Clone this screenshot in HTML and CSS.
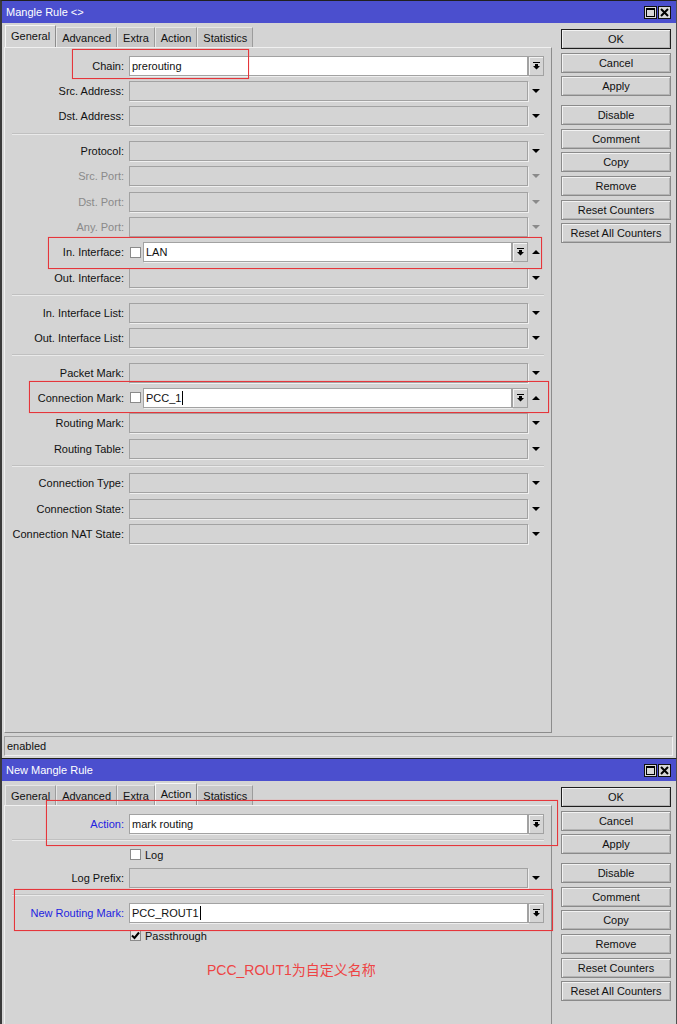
FILE: index.html
```html
<!DOCTYPE html>
<html lang="en">
<head>
    <meta charset="UTF-8">
    <title>Mangle Rule</title>
    <link rel="stylesheet" href="styles.css">
</head>
<body>
    <div class="window window-first">
        <div class="titlebar">
            <span class="title">Mangle Rule &lt;&gt;</span>
            <span class="win-controls">
                <span class="win-ctl"><svg width="9" height="9" viewBox="0 0 9 9"><rect x="0.5" y="0.5" width="8" height="8" fill="none" stroke="#000"/><rect x="0" y="0" width="9" height="2" fill="#000"/></svg></span>
                <span class="win-ctl"><svg width="9" height="9" viewBox="0 0 9 9"><path d="M1 1L8 8M8 1L1 8" stroke="#000" stroke-width="2"/></svg></span>
            </span>
        </div>
        <div class="win-body">
            <div class="main">
                <div class="tabs">
                    <span class="tab active">General</span>
                    <span class="tab">Advanced</span>
                    <span class="tab">Extra</span>
                    <span class="tab">Action</span>
                    <span class="tab">Statistics</span>
                </div>
                <div class="panel panel-first">
                    <div class="row">
                        <span class="label">Chain:</span>
                        <div class="ctrl">
                            <div class="field white">prerouting</div>
                            <span class="dd-btn"><svg width="7" height="8" viewBox="0 0 7 8"><rect width="7" height="1"/><path d="M2 2h3v2h2L3.5 7.5 0 4h2z"/></svg></span>
                        </div>
                    </div>
                    <div class="row">
                        <span class="label">Src. Address:</span>
                        <div class="ctrl"><div class="field"></div><span class="arrow"><svg width="8" height="4" viewBox="0 0 8 4"><path d="M0 0h8L4 4z"/></svg></span></div>
                    </div>
                    <div class="row">
                        <span class="label">Dst. Address:</span>
                        <div class="ctrl"><div class="field"></div><span class="arrow"><svg width="8" height="4" viewBox="0 0 8 4"><path d="M0 0h8L4 4z"/></svg></span></div>
                    </div>
                    <div class="sep"></div>
                    <div class="row">
                        <span class="label">Protocol:</span>
                        <div class="ctrl"><div class="field"></div><span class="arrow"><svg width="8" height="4" viewBox="0 0 8 4"><path d="M0 0h8L4 4z"/></svg></span></div>
                    </div>
                    <div class="row">
                        <span class="label dim">Src. Port:</span>
                        <div class="ctrl"><div class="field"></div><span class="arrow dim"><svg width="8" height="4" viewBox="0 0 8 4"><path d="M0 0h8L4 4z"/></svg></span></div>
                    </div>
                    <div class="row">
                        <span class="label dim">Dst. Port:</span>
                        <div class="ctrl"><div class="field"></div><span class="arrow dim"><svg width="8" height="4" viewBox="0 0 8 4"><path d="M0 0h8L4 4z"/></svg></span></div>
                    </div>
                    <div class="row">
                        <span class="label dim">Any. Port:</span>
                        <div class="ctrl"><div class="field"></div><span class="arrow dim"><svg width="8" height="4" viewBox="0 0 8 4"><path d="M0 0h8L4 4z"/></svg></span></div>
                    </div>
                    <div class="row">
                        <span class="label">In. Interface:</span>
                        <div class="ctrl">
                            <div class="neg">
                                <span class="check"></span>
                                <div class="field white">LAN</div>
                                <span class="dd-btn"><svg width="7" height="8" viewBox="0 0 7 8"><rect width="7" height="1"/><path d="M2 2h3v2h2L3.5 7.5 0 4h2z"/></svg></span>
                            </div>
                            <span class="arrow"><svg width="8" height="4" viewBox="0 0 8 4"><path d="M0 4h8L4 0z"/></svg></span>
                        </div>
                    </div>
                    <div class="row">
                        <span class="label">Out. Interface:</span>
                        <div class="ctrl"><div class="field"></div><span class="arrow"><svg width="8" height="4" viewBox="0 0 8 4"><path d="M0 0h8L4 4z"/></svg></span></div>
                    </div>
                    <div class="sep"></div>
                    <div class="row">
                        <span class="label">In. Interface List:</span>
                        <div class="ctrl"><div class="field"></div><span class="arrow"><svg width="8" height="4" viewBox="0 0 8 4"><path d="M0 0h8L4 4z"/></svg></span></div>
                    </div>
                    <div class="row">
                        <span class="label">Out. Interface List:</span>
                        <div class="ctrl"><div class="field"></div><span class="arrow"><svg width="8" height="4" viewBox="0 0 8 4"><path d="M0 0h8L4 4z"/></svg></span></div>
                    </div>
                    <div class="sep"></div>
                    <div class="row">
                        <span class="label">Packet Mark:</span>
                        <div class="ctrl"><div class="field"></div><span class="arrow"><svg width="8" height="4" viewBox="0 0 8 4"><path d="M0 0h8L4 4z"/></svg></span></div>
                    </div>
                    <div class="row">
                        <span class="label">Connection Mark:</span>
                        <div class="ctrl">
                            <div class="neg">
                                <span class="check"></span>
                                <div class="field white">PCC_1<span class="caret"></span></div>
                                <span class="dd-btn"><svg width="7" height="8" viewBox="0 0 7 8"><rect width="7" height="1"/><path d="M2 2h3v2h2L3.5 7.5 0 4h2z"/></svg></span>
                            </div>
                            <span class="arrow"><svg width="8" height="4" viewBox="0 0 8 4"><path d="M0 4h8L4 0z"/></svg></span>
                        </div>
                    </div>
                    <div class="row">
                        <span class="label">Routing Mark:</span>
                        <div class="ctrl"><div class="field"></div><span class="arrow"><svg width="8" height="4" viewBox="0 0 8 4"><path d="M0 0h8L4 4z"/></svg></span></div>
                    </div>
                    <div class="row">
                        <span class="label">Routing Table:</span>
                        <div class="ctrl"><div class="field"></div><span class="arrow"><svg width="8" height="4" viewBox="0 0 8 4"><path d="M0 0h8L4 4z"/></svg></span></div>
                    </div>
                    <div class="sep"></div>
                    <div class="row">
                        <span class="label">Connection Type:</span>
                        <div class="ctrl"><div class="field"></div><span class="arrow"><svg width="8" height="4" viewBox="0 0 8 4"><path d="M0 0h8L4 4z"/></svg></span></div>
                    </div>
                    <div class="row">
                        <span class="label">Connection State:</span>
                        <div class="ctrl"><div class="field"></div><span class="arrow"><svg width="8" height="4" viewBox="0 0 8 4"><path d="M0 0h8L4 4z"/></svg></span></div>
                    </div>
                    <div class="row">
                        <span class="label">Connection NAT State:</span>
                        <div class="ctrl"><div class="field"></div><span class="arrow"><svg width="8" height="4" viewBox="0 0 8 4"><path d="M0 0h8L4 4z"/></svg></span></div>
                    </div>
                </div>
            </div>
            <div class="actions">
                <span class="btn btn-default">OK</span>
                <span class="btn">Cancel</span>
                <span class="btn">Apply</span>
                <span class="btn btn-gap">Disable</span>
                <span class="btn">Comment</span>
                <span class="btn">Copy</span>
                <span class="btn">Remove</span>
                <span class="btn">Reset Counters</span>
                <span class="btn">Reset All Counters</span>
            </div>
        </div>
        <div class="status">enabled</div>

        <div class="mark mark-chain"></div>
        <div class="mark mark-in-iface"></div>
        <div class="mark mark-conn-mark"></div>
    </div>

    <div class="window window-second">
        <div class="titlebar">
            <span class="title">New Mangle Rule</span>
            <span class="win-controls">
                <span class="win-ctl"><svg width="9" height="9" viewBox="0 0 9 9"><rect x="0.5" y="0.5" width="8" height="8" fill="none" stroke="#000"/><rect x="0" y="0" width="9" height="2" fill="#000"/></svg></span>
                <span class="win-ctl"><svg width="9" height="9" viewBox="0 0 9 9"><path d="M1 1L8 8M8 1L1 8" stroke="#000" stroke-width="2"/></svg></span>
            </span>
        </div>
        <div class="win-body">
            <div class="main">
                <div class="tabs">
                    <span class="tab">General</span>
                    <span class="tab">Advanced</span>
                    <span class="tab">Extra</span>
                    <span class="tab active">Action</span>
                    <span class="tab">Statistics</span>
                </div>
                <div class="panel panel-second">
                    <div class="row">
                        <span class="label blue">Action:</span>
                        <div class="ctrl">
                            <div class="field white">mark routing</div>
                            <span class="dd-btn"><svg width="7" height="8" viewBox="0 0 7 8"><rect width="7" height="1"/><path d="M2 2h3v2h2L3.5 7.5 0 4h2z"/></svg></span>
                        </div>
                    </div>
                    <div class="sep sep-short"></div>
                    <div class="row-check">
                        <span class="check"></span>
                        <span class="check-label">Log</span>
                    </div>
                    <div class="row">
                        <span class="label">Log Prefix:</span>
                        <div class="ctrl"><div class="field"></div><span class="arrow"><svg width="8" height="4" viewBox="0 0 8 4"><path d="M0 0h8L4 4z"/></svg></span></div>
                    </div>
                    <div class="sep"></div>
                    <div class="row">
                        <span class="label blue">New Routing Mark:</span>
                        <div class="ctrl">
                            <div class="field white">PCC_ROUT1<span class="caret"></span></div>
                            <span class="dd-btn"><svg width="7" height="8" viewBox="0 0 7 8"><rect width="7" height="1"/><path d="M2 2h3v2h2L3.5 7.5 0 4h2z"/></svg></span>
                        </div>
                    </div>
                    <div class="row-check">
                        <span class="check checked"><svg width="9" height="9" viewBox="0 0 9 9"><path d="M1 4.5L3.5 7 8 1.5" fill="none" stroke="#000" stroke-width="2"/></svg></span>
                        <span class="check-label">Passthrough</span>
                    </div>
                </div>
            </div>
            <div class="actions">
                <span class="btn btn-default">OK</span>
                <span class="btn">Cancel</span>
                <span class="btn">Apply</span>
                <span class="btn btn-gap">Disable</span>
                <span class="btn">Comment</span>
                <span class="btn">Copy</span>
                <span class="btn">Remove</span>
                <span class="btn">Reset Counters</span>
                <span class="btn">Reset All Counters</span>
            </div>
        </div>

        <div class="mark mark-action"></div>
        <div class="mark mark-routing"></div>
        <div class="note">PCC_ROUT1为自定义名称</div>
    </div>
</body>
</html>
```

FILE: styles.css
```css
* {
    box-sizing: border-box;
}
body {
    margin: 0;
    width: 677px;
    height: 1024px;
    overflow: hidden;
    background-color: #d4d4d4;
    font-family: "Liberation Sans", Arial, sans-serif;
    font-size: 11px;
    color: #111;
}
.window {
    position: relative;
    width: 677px;
    background-color: #d4d4d4;
    border-top: 1px solid #202020;
    border-left: 2px solid #3a3a3a;
    border-right: 1px solid #505050;
}
.window-first {
    height: 758px;
}
.window-second {
    height: 266px;
    overflow: hidden;
}
.titlebar {
    height: 22px;
    background-color: #4b4fce;
    color: #fff;
    display: flex;
    align-items: center;
    justify-content: space-between;
    padding: 0 5px 0 4px;
}
.win-controls {
    display: flex;
    gap: 1px;
}
.win-ctl {
    width: 13px;
    height: 13px;
    background-color: #d8d8d8;
    border: 1px solid #111;
    display: flex;
    align-items: center;
    justify-content: center;
}
.win-body {
    display: flex;
    padding: 2px 0 0 2px;
}
.main {
    width: 548px;
}
.tabs {
    display: flex;
    align-items: flex-end;
    height: 22px;
    padding-left: 1px;
}
.tab {
    height: 20px;
    padding: 0 5px;
    display: flex;
    align-items: center;
    background-color: #c8c8c8;
    border: 1px solid #9c9c9c;
    border-color: #e6e6e6 #9c9c9c transparent #e6e6e6;
    border-bottom: none;
}
.tab.active {
    height: 22px;
    padding-bottom: 2px;
    background-color: #d4d4d4;
    border-color: #f6f6f6 #8c8c8c transparent #f6f6f6;
}
.panel {
    border: 1px solid;
    border-color: #f0f0f0 #8c8c8c #8c8c8c #f0f0f0;
    padding: 5px 7px 0 0;
}
.panel-first {
    height: 686px;
}
.panel-second {
    height: 320px;
}
.row {
    height: 25.3px;
    display: flex;
    align-items: center;
}
.label {
    width: 119px;
    margin-right: 5px;
    text-align: right;
    white-space: nowrap;
}
.label.dim {
    color: #8a8a8a;
}
.label.blue {
    color: #2323e0;
}
.ctrl {
    flex: 1;
    height: 20px;
    display: flex;
    align-items: center;
}
.neg {
    flex: 1;
    height: 20px;
    display: flex;
    align-items: center;
}
.field {
    flex: 1;
    height: 20px;
    padding-left: 2px;
    display: flex;
    align-items: center;
    background-color: #d4d4d4;
    border: 1px solid #a2a2a2;
    box-shadow: 1px 1px 0 #efefef;
    white-space: nowrap;
}
.field.white {
    background-color: #fff;
}
.caret {
    display: inline-block;
    width: 1px;
    height: 14px;
    margin-left: 1px;
    background-color: #000;
}
.dd-btn {
    width: 16px;
    height: 20px;
    display: flex;
    align-items: center;
    justify-content: center;
    background-color: #d4d4d4;
    border: 1px solid #a2a2a2;
    box-shadow: inset 1px 1px 0 #f4f4f4;
}
.arrow {
    width: 16px;
    height: 20px;
    display: flex;
    align-items: center;
    justify-content: center;
}
.arrow.dim svg {
    fill: #8a8a8a;
}
.check {
    width: 11px;
    height: 11px;
    margin: 0 2px 0 1px;
    background-color: #fff;
    border: 1px solid #8a8a8a;
    display: flex;
    align-items: center;
    justify-content: center;
}
.check.checked {
    background-color: #e4e4e4;
}
.row-check {
    height: 21px;
    display: flex;
    align-items: center;
    padding-left: 124px;
}
.check-label {
    margin-left: 2px;
}
.sep {
    height: 9.6px;
    display: flex;
    align-items: center;
    padding-left: 7px;
}
.sep::before {
    content: "";
    flex: 1;
    border-top: 1px solid #c0c0c0;
    border-bottom: 1px solid #eaeaea;
}
.sep-short {
    height: 8px;
}
.actions {
    width: 110px;
    margin-left: 9px;
    padding-top: 4px;
    display: flex;
    flex-direction: column;
    gap: 3.7px;
}
.btn {
    height: 20px;
    display: flex;
    align-items: center;
    justify-content: center;
    background-color: #d4d4d4;
    border: 1px solid #8a8a8a;
    box-shadow: inset 1px 1px 0 #f2f2f2, inset -1px -1px 0 #b4b4b4;
    white-space: nowrap;
}
.btn-default {
    border-color: #1e1e1e;
}
.btn-gap {
    margin-top: 4.9px;
}
.status {
    width: 669px;
    height: 20px;
    margin: 3px 0 0 2px;
    padding-left: 2px;
    display: flex;
    align-items: center;
    border: 1px solid;
    border-color: #a0a0a0 #f0f0f0 #f0f0f0 #a0a0a0;
}
.mark {
    position: absolute;
    border: 1px solid #e5363b;
    box-shadow: 0 0 1px rgba(255, 90, 90, 0.6);
}
.mark-chain {
    left: 70px;
    top: 48px;
    width: 177px;
    height: 30px;
}
.mark-in-iface {
    left: 46px;
    top: 236px;
    width: 494px;
    height: 32px;
}
.mark-conn-mark {
    left: 27px;
    top: 380px;
    width: 520px;
    height: 32px;
}
.mark-action {
    left: 44px;
    top: 41px;
    width: 512px;
    height: 46px;
}
.mark-routing {
    left: 12px;
    top: 130px;
    width: 539px;
    height: 42px;
}
.note {
    position: absolute;
    left: 205px;
    top: 200px;
    font-family: "Liberation Sans", "Noto Sans CJK SC", sans-serif;
    font-size: 14px;
    color: #ee4444;
}
```
